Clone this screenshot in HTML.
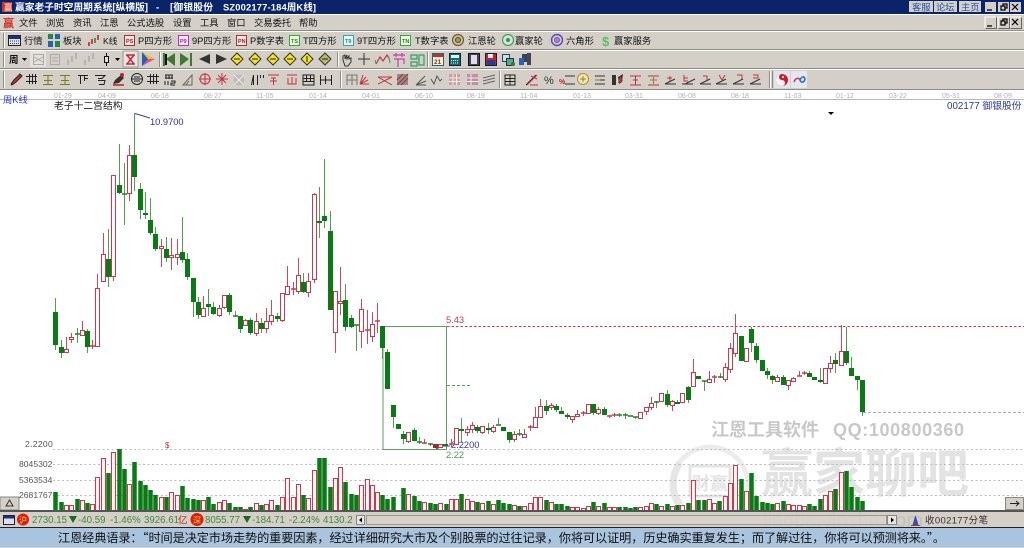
<!DOCTYPE html>
<html><head><meta charset="utf-8"><title>赢家老子时空周期系统</title>
<style>
html,body{margin:0;padding:0;width:1024px;height:548px;overflow:hidden;background:#fff}
svg{display:block;filter:blur(.3px)}
text{font-family:"Liberation Sans","WenQuanYi Zen Hei","Noto Sans CJK SC",sans-serif;white-space:pre}
.m{font-size:9.3px;fill:#111}
.ax{font-size:7px;fill:#b0b0b0}
.vl{font-size:8.6px;fill:#555}
.st{font-size:9.7px;fill:#3f8a3f}
.bx{font-size:5.5px;font-weight:bold}
.n{fill:none}
</style></head><body>
<svg width="1024" height="548" viewBox="0 0 1024 548" xmlns="http://www.w3.org/2000/svg">
<rect width="1024" height="548" fill="#fff"/>

<!-- title bar -->
<rect width="1024" height="14" fill="#0a246a"/>
<rect x="2" y="2" width="10" height="10" fill="#c9342a"/>
<text x="4" y="10.5" font-size="8.5" font-weight="bold" fill="#f6d3c0">赢</text>
<g font-size="9.8" font-weight="bold" fill="#fff"><text x="15" y="10.5" textLength="133">赢家老子时空周期系统[纵横版]</text><text x="156" y="10.5">-</text><text x="170" y="10.5" textLength="43">[御银股份</text><text x="223" y="10.5" textLength="93" font-size="9.4">SZ002177-184周K线]</text></g>
<g fill="#d4d0c8"><rect x="909" y="1" width="24" height="11"/><rect x="934" y="1" width="23" height="11"/><rect x="959" y="1" width="22" height="11"/><rect x="985" y="2" width="11" height="10"/><rect x="998" y="2" width="11" height="10"/><rect x="1010" y="2" width="11" height="10"/></g>
<g font-size="9.3" fill="#1f4fb0"><text x="912" y="10.5">客服</text><text x="936" y="10.5">论坛</text><text x="961" y="10.5">主页</text></g>
<path class="n" stroke="#000" stroke-width="1.2" d="M987 10h5M1001 6h4v4h-4zM1003 6v-2h4v4h-2M1012 4l6 6M1018 4l-6 6"/>

<!-- menu + toolbars bg -->
<rect y="14" width="1024" height="76" fill="#d4d0c8"/>
<path class="n" stroke="#fff" d="M0 14.5H1024M0 31.5H1024M0 50.5H1024M0 69.5H1024"/>
<path class="n" stroke="#8f8c85" d="M0 30.5H1024M0 49.5H1024M0 68.5H1024M0 89.5H1024"/>
<path class="n" stroke="#8f8c85" d="M3.5 33v15M3.5 52v15M3.5 71v17M159.5 52v15M337.5 52v15M427.5 52v15M340.5 71v17M499.5 71v17M769.5 71v17M772.5 71v17"/>
<path class="n" stroke="#fff" d="M4.5 33v15M4.5 52v15M4.5 71v17M160.5 52v15M338.5 52v15M428.5 52v15M341.5 71v17M500.5 71v17M770.5 71v17"/>

<!-- menu -->
<text x="3" y="27" font-size="11" font-weight="bold" fill="#d02a20">赢</text>
<g class="m"><text x="19" y="26">文件</text><text x="46" y="26">浏览</text><text x="73" y="26">资讯</text><text x="100" y="26">江恩</text><text x="127" y="26">公式选股</text><text x="173" y="26">设置</text><text x="200" y="26">工具</text><text x="227" y="26">窗口</text><text x="254" y="26">交易委托</text><text x="299" y="26">帮助</text></g>
<g fill="#d4d0c8"><rect x="985" y="17" width="11" height="11"/><rect x="998" y="17" width="11" height="11"/><rect x="1010" y="17" width="11" height="11"/></g>
<path class="n" stroke="#000" stroke-width="1.2" d="M987 26h5M1001 21h4v4h-4zM1003 21v-2h4v4h-2M1012 19l6 6M1018 19l-6 6"/>
<path class="n" stroke="#fff" d="M985 28V17h11M998 28V17h11M1010 28V17h11"/>
<path class="n" stroke="#666" d="M985.5 28.5h11v-11M998.5 28.5h11v-11M1010.5 28.5h11v-11"/>

<!-- toolbar row 1 -->
<rect x="8.5" y="35.5" width="12" height="10" fill="#dfe4f0" stroke="#223"/><rect x="9" y="36" width="11" height="3" fill="#1a2f80"/><path stroke="#334" stroke-dasharray="1 1" d="M10 41h9M10 43.5h9"/>
<g fill="#1c8a4c"><rect x="48" y="34" width="5" height="5"/><rect x="55" y="41" width="5" height="6"/></g><g fill="#2a5fb0"><rect x="55" y="34" width="5" height="5"/><rect x="48" y="41" width="5" height="6"/></g>
<path stroke="#c92020" stroke-width="1.6" d="M89 42v4M92 39v5M98 35v5"/><path stroke="#2a8a2a" stroke-width="1.6" d="M95 38v5"/>
<g class="m"><text x="24" y="44">行情</text><text x="63" y="44">板块</text><text x="103" y="44" font-size="8.6">K线</text><text x="138" y="44">P四方形</text><text x="192" y="44">9P四方形</text><text x="250" y="44">P数字表</text><text x="303" y="44">T四方形</text><text x="357" y="44">9T四方形</text><text x="415" y="44">T数字表</text><text x="468" y="44">江恩轮</text><text x="515" y="44">赢家轮</text><text x="566" y="44">六角形</text><text x="614" y="44">赢家服务</text></g>
<g><rect x="124.5" y="35.5" width="10" height="10" fill="#f6e6e6" stroke="#a33"/><text class="bx" x="126" y="43" fill="#a22">PS</text>
<rect x="178.5" y="35.5" width="10" height="10" fill="#f7eaf7" stroke="#b3b"/><text class="bx" x="180" y="43" fill="#a2a">P9</text>
<rect x="236.5" y="35.5" width="10" height="10" fill="#f6e6e6" stroke="#a33"/><text class="bx" x="238" y="43" fill="#a22">PN</text>
<rect x="289.5" y="35.5" width="10" height="10" fill="#eef8e6" stroke="#3a3"/><text class="bx" x="291" y="43" fill="#282">TS</text>
<rect x="343.5" y="35.5" width="10" height="10" fill="#e6f6f6" stroke="#3aa"/><text class="bx" x="345" y="43" fill="#288">T9</text>
<rect x="400.5" y="35.5" width="10" height="10" fill="#eef8e6" stroke="#3a3"/><text class="bx" x="402" y="43" fill="#282">TN</text></g>
<circle cx="458" cy="40" r="5.5" fill="#c8c090" stroke="#7a5a30" stroke-width="1.2"/><circle cx="458" cy="40" r="2.5" fill="#8aa070" stroke="#644"/>
<circle cx="508" cy="40" r="5.5" fill="#cfe8cf" stroke="#4a9a6a" stroke-width="1.2"/><circle cx="508" cy="40" r="2" fill="#3a8a6a"/>
<circle cx="557" cy="40" r="5.5" fill="#e0c0e0" stroke="#5050b0" stroke-width="1.4"/><circle cx="557" cy="40" r="2.5" fill="#70a0d0" stroke="#b04080"/>
<text x="602" y="46" font-size="13" font-weight="bold" fill="#5cc060">$</text>

<!-- toolbar row 2 -->
<text x="9" y="63" font-size="9.5" font-weight="bold" fill="#111">周</text>
<path d="M22 58h5l-2.500 3zM115 58h5l-2.500 3z" fill="#000"/>
<rect x="30" y="51" width="16" height="16" fill="#e4e2dc"/>
<rect x="33.500" y="54.500" width="10" height="10" fill="none" stroke="#aaa"/><path class="n" stroke="#aaa" d="M34 57l9 5M43 57l-9 5"/>
<rect x="50.500" y="54.500" width="9" height="10" fill="none" stroke="#aaa"/><path class="n" stroke="#aaa" d="M52 58h6M52 61h6"/>
<path class="n" stroke="#aaa" stroke-width="1.500" d="M68 60v5M72 56v6M76 53v6M85 60v5M89 56v6M93 53v6"/>
<path class="n" stroke="#111" d="M106.500 53v13"/><rect x="104.500" y="56.500" width="4" height="6" fill="#ddd" stroke="#111"/>
<rect x="123" y="51" width="15" height="16" fill="#e8e6e0" stroke="#999"/><path class="n" stroke="#c52a3a" stroke-width="1.500" d="M126 55h9M126 64h9M127 55l7 9M134 55l-7 9"/>
<path d="M142 52l13 7-13 0z" fill="#f0c020"/><path d="M142 59h13l-13 7z" fill="#e050a0"/><path d="M142 52v14l6-7z" fill="#2060c0"/>
<path d="M163 53h2v13h-2zM166 59l9-6v13z" fill="#3d7a30"/><path d="M192 53h-2v13h2zM189 59l-9-6v13z" fill="#3d7a30"/><path d="M165 54h2v11h-2z" fill="#111"/>
<path d="M199 59l11-5v10z" fill="#333"/><path d="M227 59l-11-5v10z" fill="#333"/>
<g fill="#f2e22a" stroke="#333"><path d="M237 53l6 6-6 6-6-6zM255 53l6 6-6 6-6-6zM273 53l6 6-6 6-6-6zM290 53l6 6-6 6-6-6zM307 53l6 6-6 6-6-6z"/><path d="M325 53l6 6-6 6-6-6z" fill="#bdb86a"/></g>
<path class="n" stroke="#222" d="M234 59h6M252 59h6M270 59h6M287 59h6M307 56v6M322 59h6"/>
<path class="n" stroke="#333" d="M343 60v-4l2-1v4l2-4v4l2-3v3l2-1v4l-3 4h-3z"/>
<path class="n" stroke="#333" d="M364 53v12M358 59h12"/>
<path class="n" stroke="#c83040" stroke-width="1.200" d="M376 64l4-7 3 4 4-6 2 3"/><path class="n" stroke="#3a9a5a" d="M376 64l-1-4M389 58l1 5"/>
<path class="n" stroke="#c040b0" stroke-width="1.200" d="M393 55h12M396 53v4M402 53v4M394 59h10v5M398 59v8"/>
<path class="n" stroke="#30a060" stroke-width="1.200" d="M411 55h6v4h-6zM419 55h5v10h-5zM411 62h6v4h-6z"/>
<rect x="432.500" y="53.500" width="11" height="12" fill="#f8f0d0" stroke="#1a6a80"/><rect x="433" y="54" width="10" height="3" fill="#c03030"/><text x="434" y="64" font-size="6.500" font-weight="bold" fill="#a03020">21</text>
<rect x="449.500" y="53.500" width="11" height="12" fill="#1c6a70" stroke="#123"/><rect x="451" y="55" width="8" height="3" fill="#cfe"/><path stroke="#cfe" stroke-dasharray="1 1" d="M451 60.500h8M451 63h8"/>
<rect x="468.500" y="53.500" width="11" height="12" fill="#445" stroke="#112"/><rect x="471" y="55" width="6" height="9" fill="#dde"/>
<rect x="485.500" y="53.500" width="11" height="12" fill="#c82030" stroke="#123"/><rect x="487" y="60" width="8" height="5" fill="#2040a0"/><rect x="488" y="54" width="5" height="4" fill="#eee"/>
<rect x="502.500" y="54.500" width="7" height="7" fill="#cde" stroke="#345"/><rect x="506.500" y="58.500" width="7" height="7" fill="#5a8" stroke="#234"/>
<circle cx="513" cy="64" r="2" fill="#2a7a3a"/>
<rect x="522" y="54" width="6" height="8" fill="#345"/><rect x="527" y="53" width="4" height="12" fill="#445"/><path d="M519 58h5v7h-5z" fill="#3060b0"/>

<!-- toolbar row 3 -->
<g class="n" stroke="#222">
<path d="M26 76.500h11M26 81.500h11M29.500 74v10M32.500 74v10M35.500 74v10M147 76.500h12M147 81.500h12M150.500 74v10M153.500 74v10M156.500 74v10"/>
<path d="M78 75.500h10M80.500 75v9M84.500 75v6M84 78.500h4M95 75.500h10l-3 3h-4M98 80.500h7l-1 4h-5"/>
<circle cx="137" cy="79" r="5.500"/><path d="M131 79h12M134 77h6M134 81h6"/>
<path d="M165 75h8M165 78h8M166 75v4M169 75v4M172 75v4M165 81v4M168 81v4M171 81h4v2h-4v2h4"/>
<path d="M183 85l9-10v10zM186 85l3-4" stroke="#666"/>
<path d="M251.500 85l2-10v10M257.500 85v-10M260.500 75v3M263.500 75v3"/>
<path d="M303 75h11v10h-11zM303 78.500h11M303 81.500h11M306.500 75v6M310.500 75v6"/>
<path d="M320.500 75v10M331.500 75v10M321 80h10M325.500 76v8"/>
<path d="M347 75h10v5h-10zM347 75v10M352 75v10M357 75v10" stroke="#777"/>
<path d="M416 85l9-9M416 85l10-4M416 85h10" stroke="#555"/>
<path d="M431 79l3 5 3-8 3 5 2-2" stroke="#555"/>
<path d="M483 78l12-3M483 81l12-3M483 84l12-3" stroke="#666"/>
<path d="M505 75h10v10h-10zM505 78.500h10M505 81.500h10M510 75v10"/>
<path d="M526 85l10-10"/>
</g>
<path d="M11 84l3-4 6-6 2 2-6 6-4 3z" fill="#c83030" stroke="#222"/>
<path class="n" stroke="#7a7a20" d="M43 75.500h10M44 80.500h8M43 84.500h10M48 75v10M60 75.500h10M61 80.500h8M60 84.500h10M65 75v10"/>
<path d="M113 84l2-4 6-5 3 3-5 5z" fill="#333"/><path d="M113 85h11" stroke="#c02020" stroke-width="1.500"/><circle cx="122" cy="75" r="2" fill="#c02020"/>
<g class="n" stroke="#c83040"><circle cx="205" cy="79" r="5"/><path d="M199 79h12M205 73v12M216 79h12M222 73v12M218 75l8 8M226 75l-8 8"/><path d="M268 75h11M271 78h5M270 81h7M273.500 78v7M287 75h10M288 78v6h8v-6M292 77v7M360 84l3-9M360 84l6-7M360 84l8-4M360 84h9M378 77l14 0M378 84l14-7M378 77l14 8"/></g>
<rect x="234" y="75" width="10" height="10" fill="#bbb"/><path stroke="#eee" d="M234 75l10 10M244 75l-10 10"/>
<rect x="397" y="74" width="11" height="11" fill="#b87a80"/><path stroke="#555" d="M397 85l11-11M401 85l7-7M397 80l6-6"/>
<rect x="449" y="74" width="11" height="11" fill="#d0a0a0"/><path stroke="#eee" d="M449 78h11M449 81.500h11M453 74v11M456.500 74v11"/>
<rect x="467" y="74" width="11" height="11" fill="#c090a0"/><path stroke="#eee" d="M467 78h11M467 81.500h11M471 74v11"/>
<path class="n" stroke="#c83040" d="M527 85l10-10M530 85h8M531 76l6 3"/>
<text x="544" y="84" font-size="11" fill="#333">%</text>
<path class="n" stroke="#333" d="M565 76h10M565 84h10"/><text x="559" y="84" font-size="7" font-weight="bold" fill="#c02020">%</text>
<circle cx="583" cy="79" r="5.500" fill="#f0e8b0" stroke="#b09030"/><path class="n" stroke="#a08020" d="M580 79h6M583 76v6"/>
<path class="n" stroke="#333" d="M595 76h10M595 84h10M600 80h5"/><path stroke="#8a8020" d="M595 80h5"/>
<path d="M612 75h4v10h-4zM618 77l5-3-1 8-3 2z" fill="#333"/><path d="M620 76l3 5-5 2z" fill="#c03030"/>
<path class="n" stroke="#c83040" d="M630 85h11M630 76h11M633 80h5M635.500 76v9"/>
<path class="n" stroke="#c83040" d="M648 85h11M648 76h11"/><path class="n" stroke="#a08020" d="M650 80h7M653.500 77v7"/>
<g class="n" stroke="#333"><path d="M665 84l10-5M665 84h11M685 84l10-5M682 84h11M700 84l10-5M700 84h11M716 84l10-5M716 84h11M733 84l10-5M733 84h11M750 84l10-5M750 84h11"/></g>
<g class="n" stroke="#c83040"><path d="M670 76v5M667 78h5M684 75v6h4M684 78h4M703 76h4v4M719 75l3 5M725 75l-3 5M737 75h5v4M753 75h5v3h-5"/></g>
<rect x="774" y="71" width="16" height="17" fill="#dde6f0"/><rect x="791" y="71" width="16" height="17" fill="#e4e8ee"/>
<circle cx="782" cy="80" r="6" fill="#d01828"/><path d="M782 74a3 3 0 0 1 0 6a3 3 0 0 0 0 6a6 6 0 0 0 0-12z" fill="#f4f4f4" transform="matrix(-1 0 0 1 1564 0)"/><circle cx="783" cy="77" r="1" fill="#fff"/>
<path class="n" stroke="#e03060" stroke-width="1.600" d="M794 82c2-5 5-4 6-2"/><path class="n" stroke="#3070d0" stroke-width="1.600" d="M800 80c1 3 4 3 5-1c-1-3-3-3-5 1"/>

<!-- time axis -->
<path stroke="#b8b8b8" d="M0 99.500H1024"/>
<g class="ax">
<text x="54" y="98">01-29</text><text x="98" y="98">04-09</text><text x="151" y="98">06-18</text><text x="204" y="98">08-27</text><text x="256" y="98">11-05</text><text x="309" y="98">01-14</text><text x="362" y="98">04-01</text><text x="415" y="98">06-10</text><text x="467" y="98">08-19</text><text x="520" y="98">11-04</text><text x="573" y="98">01-13</text><text x="625" y="98">03-31</text><text x="678" y="98">06-08</text><text x="731" y="98">08-18</text><text x="784" y="98">11-03</text><text x="836" y="98">01-12</text><text x="889" y="98">03-22</text><text x="942" y="98">05-31</text><text x="994" y="98">08-09</text>
</g>
<text x="3" y="103" font-size="9.300" fill="#2a3cc8">周K线</text>
<text x="54" y="109" font-size="9.800" fill="#222">老子十二宫结构</text>
<text x="947" y="109" font-size="9.800" fill="#2a3a9a">002177 御银股份</text>
<path d="M828 112h6l-3 3z" fill="#000"/>

<!-- watermark -->
<g>
<g class="n" stroke="#ececec" stroke-width="5"><circle cx="710" cy="485" r="38"/></g>
<g class="n" stroke="#e6e6e6" stroke-width="7"><path d="M680 505a36 36 0 0 1 0-42"/></g>
<rect x="690" y="466" width="40" height="30" fill="none" stroke="#e4e4e4" stroke-width="3"/>
<text x="692" y="490" font-size="18" font-weight="bold" fill="#e4e4e4">财赢</text>
<text x="761" y="492" font-size="52" font-weight="bold" fill="#e3e3e3">赢家聊吧</text>
<text x="711" y="436" font-size="18" font-weight="bold" fill="#c8c8c8">江恩工具软件</text>
<text x="833" y="436" font-size="18" font-weight="bold" fill="#c8c8c8" textLength="131">QQ:100800360</text>
</g>

<!-- grid + reference lines -->
<g class="n" stroke="#bdbdbd" stroke-dasharray="2 2.500"><path d="M53 449.500H1024M53 464.500H1024M53 480.500H1024M53 495.500H1024"/></g>
<path class="n" stroke="#aaa" stroke-dasharray="3 2" d="M863 412.500H1024"/>
<path class="n" stroke="#d03a48" stroke-dasharray="2.500 2" d="M447 326.500H1024"/>
<path class="n" stroke="#5fa05f" d="M383 326.500H446.500V449.500H383z"/>
<path class="n" stroke="#5fa05f" stroke-dasharray="3 2" d="M447 385.500H472"/>
<path class="n" stroke="#3a3aaa" d="M135 113.500l15 4.500"/>
<text x="150" y="125" font-size="9.300" fill="#303090">10.9700</text>
<text x="446" y="323" font-size="9.300" fill="#c04050">5.43</text>
<text x="451" y="448" font-size="9.300" fill="#3a3ab0">2.2200</text>
<text x="446" y="458" font-size="9.300" fill="#4a9a4a">2.22</text>
<path class="n" stroke="#3a3ab0" d="M436 449l6-3h8"/>
<text x="165" y="448" font-size="8" fill="#c83030">$</text>

<!-- candles: green wicks -->
<path class="n" stroke="#4f9f4f" d="M55.500 298V350M61.500 340V358M77.500 328V343M87.500 329V353M108.500 229V287M119.500 144V194M124.500 163V225M134.500 113V191M140.500 183V219M145.500 192V219M150.500 198V235M155.500 227V251M166.500 237V262M182.500 217V263M187.500 253V280M193.500 278V317M198.500 297V319M208.500 289V316M213.500 302V315M229.500 293V315M235.500 311V317M240.500 316V333M250.500 318V335M261.500 318V333M277.500 313V322M303.500 273V293M319.500 187V238M324.500 159V228M330.500 211V310M345.500 284V331M351.500 315V328M356.500 325V351M382.500 326V359M387.500 349V389M393.500 405V428M403.500 431V444M414.500 428V441M419.500 437V444M430.500 443V446M461.500 418V443M477.500 425V433M488.500 423V434M498.500 418V425M509.500 432V443M519.500 429V436M546.500 400V415M556.500 404V412M561.500 407V414M567.500 413V419M593.500 404V415M604.500 407V415M619.500 413V417M625.500 413V419M635.500 417V419M656.500 401V408M667.500 390V407M677.500 400V404M688.500 386V403M704.500 381V391M720.500 373V378M751.500 327V352M756.500 343V363M767.500 368V379M772.500 375V384M783.500 375V385M809.500 371V377M820.500 368V383M835.500 353V373M846.500 327V365M851.500 357V376M857.500 376V390M862.500 380V416"/>
<!-- green bodies -->
<path class="n" stroke="#0a7a14" stroke-width="5" d="M55.500 312V345M61.500 347V353M87.500 331V347M108.500 259V277M119.500 185V193M134.500 155V177M140.500 189V210M145.500 213V215M150.500 220V233M155.500 234V249M166.500 249V258M182.500 252V260M187.500 259V277M193.500 278V302M198.500 302V315M208.500 304V307M213.500 307V314M229.500 295V312M240.500 316V329M250.500 320V333M261.500 323V329M277.500 316V319M303.500 282V292M319.500 221V223M324.500 216V221M330.500 231V310M345.500 300V327M351.500 318V327M382.500 326V348M387.500 352V389M393.500 405V417M398.500 424V429M403.500 434V439M414.500 430V441M445.500 444V446M461.500 429V431M477.500 427V431M488.500 428V430M503.500 427V431M509.500 432V440M546.500 406V411M556.500 406V410M561.500 411V414M567.500 415V417M593.500 404V413M604.500 409V415M667.500 394V405M677.500 402V404M688.500 387V400M698.500 376V379M741.500 336V361M751.500 329V343M756.500 346V360M762.500 360V371M767.500 371V375M772.500 376V380M783.500 377V385M809.500 373V377M814.500 377V380M820.500 380V382M835.500 360V364M846.500 351V363M851.500 368V376M857.500 376V380M862.500 380V412"/>
<!-- green dojis -->
<path class="n" stroke="#1a8020" stroke-width="1.500" d="M75 334h5M122 194h5M233 316h5M354 325h5M417 442h5M428 444h5M496 425h5M517 434h5M617 415h5M623 415h5M628 416h5M633 417h5M654 402h5M702 381h5M718 377h5"/>
<!-- red wicks -->
<path class="n" stroke="#d0485a" d="M66.500 337V353M71.500 333V343M82.500 321V336M92.500 340V349M97.500 274V347M103.500 233V281M113.500 175V281M129.500 145V201M161.500 239V267M171.500 238V270M177.500 239V265M203.500 296V317M219.500 305V317M224.500 295V309M245.500 319V326M256.500 313V336M266.500 308V333M271.500 300V325M282.500 293V322M287.500 266V295M293.500 282V295M298.500 258V294M308.500 273V297M314.500 193V283M335.500 291V353M340.500 267V315M361.500 299V348M367.500 310V344M372.500 312V342M377.500 303V333M408.500 432V443M424.500 439V444M451.500 439V447M467.500 426V436M472.500 422V433M482.500 426V434M493.500 425V433M514.500 431V442M524.500 429V438M530.500 425V431M535.500 407V427M540.500 399V417M551.500 403V410M572.500 416V423M577.500 410V416M583.500 411V416M598.500 407V415M609.500 415V418M614.500 413V417M646.500 407V415M651.500 397V410M672.500 400V411M693.500 359V386M709.500 371V382M714.500 375V383M725.500 363V382M730.500 343V373M735.500 314V357M777.500 375V381M788.500 380V390M793.500 377V381M799.500 371V376M804.500 371V375M830.500 356V373M841.500 325V365"/>
<!-- red bodies -->
<g transform="translate(0 .5)"><path fill="#fff" stroke="#c93a4c" d="M64.500 349h4V352h-4zM69.500 337h4V339h-4zM80.500 330h4V335h-4zM95.500 288h4V346h-4zM101.500 254h4V281h-4zM111.500 175h4V276h-4zM127.500 155h4V193h-4zM159.500 246h4V248h-4zM169.500 255h4V257h-4zM175.500 254h4V257h-4zM201.500 308h4V316h-4zM217.500 308h4V315h-4zM222.500 295h4V307h-4zM243.500 320h4V325h-4zM254.500 321h4V333h-4zM264.500 321h4V328h-4zM269.500 315h4V321h-4zM280.500 293h4V320h-4zM285.500 286h4V294h-4zM296.500 275h4V291h-4zM306.500 281h4V292h-4zM312.500 194h4V279h-4zM333.500 291h4V332h-4zM338.500 301h4V303h-4zM359.500 309h4V331h-4zM370.500 324h4V336h-4zM406.500 432h4V441h-4zM438.500 444h4V447h-4zM454.500 428h4V444h-4zM465.500 429h4V432h-4zM470.500 425h4V429h-4zM480.500 426h4V432h-4zM491.500 427h4V431h-4zM512.500 434h4V439h-4zM522.500 434h4V437h-4zM533.500 417h4V427h-4zM538.500 406h4V417h-4zM549.500 405h4V407h-4zM570.500 416h4V419h-4zM575.500 414h4V416h-4zM586.500 404h4V413h-4zM596.500 409h4V413h-4zM638.500 412h4V418h-4zM644.500 407h4V411h-4zM649.500 403h4V407h-4zM659.500 393h4V401h-4zM670.500 401h4V405h-4zM680.500 393h4V402h-4zM691.500 372h4V386h-4zM707.500 379h4V382h-4zM723.500 367h4V379h-4zM728.500 348h4V369h-4zM733.500 333h4V353h-4zM744.500 348h4V361h-4zM775.500 377h4V381h-4zM786.500 380h4V385h-4zM791.500 378h4V381h-4zM823.500 368h4V383h-4zM828.500 363h4V368h-4zM839.500 351h4V365h-4z"/></g>
<path d="M433 444h5v4h-5z" fill="#a02a2a"/>
<path class="n" stroke="#c93a4c" stroke-width="1.500" d="M90 346h5M291 289h5M365 330h5M375 321h5M422 443h5M449 444h5M528 427h5M581 413h5M607 416h5M612 415h5M712 377h5M797 376h5M802 373h5"/>

<!-- volume labels -->
<g class="vl"><text x="25" y="447" letter-spacing=".3">2.2200</text><text x="19" y="467">8045302</text><text x="19" y="483">5363534</text><text x="19" y="498">2681767</text></g>

<!-- volume green -->
<path class="n" stroke="#0a7a14" stroke-width="4.500" d="M55.500 492V510M61.500 502V510M77.500 499V510M87.500 503V510M108.500 473V510M119.500 449V510M124.500 469V510M134.500 462V510M140.500 481V510M145.500 485V510M150.500 490V510M155.500 495V510M166.500 497V510M182.500 486V510M187.500 498V510M193.500 499V510M198.500 500V510M208.500 497V510M213.500 504V510M229.500 503V510M235.500 507V510M240.500 507V510M250.500 507V510M261.500 505V510M277.500 505V510M303.500 495V510M319.500 458V510M324.500 458V510M330.500 487V510M345.500 482V510M351.500 494V510M356.500 495V510M382.500 495V510M387.500 499V510M393.500 497V510M403.500 488V510M414.500 496V510M419.500 501V510M430.500 503V510M435.500 504V510M446.500 504V510M461.500 494V510M477.500 502V510M488.500 501V510M498.500 500V510M503.500 503V510M509.500 504V510M519.500 506V510M546.500 500V510M556.500 504V510M561.500 504V510M567.500 506V510M593.500 502V510M604.500 503V510M619.500 507V510M625.500 507V510M630.500 508V510M635.500 507V510M656.500 504V510M667.500 504V510M677.500 505V510M688.500 503V510M698.500 500V510M704.500 500V510M719.500 501V510M741.500 479V510M751.500 473V510M756.500 496V510M762.500 502V510M767.500 503V510M772.500 504V510M783.500 501V510M809.500 504V510M814.500 506V510M820.500 499V510M835.500 489V510M846.500 471V510M851.500 487V510M857.500 497V510M862.500 501V510"/>
<!-- volume red -->
<g transform="translate(0 .5)"><path fill="#fff3f3" stroke="#c93a4c" d="M64.500 505h4V510h-4zM69.500 505h4V510h-4zM80.500 500h4V510h-4zM90.500 504h4V510h-4zM95.500 477h4V510h-4zM101.500 458h4V510h-4zM111.500 452h4V510h-4zM127.500 484h4V510h-4zM159.500 497h4V510h-4zM169.500 492h4V510h-4zM175.500 495h4V510h-4zM201.500 500h4V510h-4zM217.500 502h4V510h-4zM222.500 500h4V510h-4zM243.500 509h4V510h-4zM254.500 503h4V510h-4zM264.500 504h4V510h-4zM269.500 500h4V510h-4zM280.500 497h4V510h-4zM285.500 478h4V510h-4zM291.500 497h4V510h-4zM296.500 484h4V510h-4zM306.500 498h4V510h-4zM312.500 470h4V510h-4zM333.500 478h4V510h-4zM338.500 467h4V510h-4zM359.500 485h4V510h-4zM365.500 479h4V510h-4zM370.500 485h4V510h-4zM375.500 492h4V510h-4zM406.500 494h4V510h-4zM422.500 502h4V510h-4zM438.500 503h4V510h-4zM449.500 499h4V510h-4zM454.500 499h4V510h-4zM465.500 499h4V510h-4zM470.500 501h4V510h-4zM480.500 503h4V510h-4zM491.500 504h4V510h-4zM512.500 505h4V510h-4zM522.500 506h4V510h-4zM528.500 503h4V510h-4zM533.500 497h4V510h-4zM538.500 497h4V510h-4zM549.500 502h4V510h-4zM570.500 507h4V510h-4zM575.500 507h4V510h-4zM581.500 508h4V510h-4zM586.500 506h4V510h-4zM596.500 506h4V510h-4zM607.500 507h4V510h-4zM612.500 507h4V510h-4zM638.500 507h4V510h-4zM644.500 506h4V510h-4zM649.500 503h4V510h-4zM659.500 506h4V510h-4zM670.500 506h4V510h-4zM680.500 505h4V510h-4zM691.500 480h4V510h-4zM707.500 499h4V510h-4zM712.500 503h4V510h-4zM723.500 496h4V510h-4zM728.500 483h4V510h-4zM733.500 465h4V510h-4zM744.500 491h4V510h-4zM775.500 503h4V510h-4zM786.500 504h4V510h-4zM791.500 505h4V510h-4zM797.500 505h4V510h-4zM802.500 506h4V510h-4zM823.500 495h4V510h-4zM828.500 491h4V510h-4zM839.500 472h4V510h-4z"/></g>

<!-- buttons over the volume panel -->
<rect x="0" y="497" width="19" height="13" fill="#d4d0c8" stroke="#888"/><path class="n" stroke="#333" d="M6 506l3.500-6 3.500 6z"/>
<rect x="1005.500" y="497.500" width="18" height="12" fill="#d4d0c8" stroke="#888"/><path class="n" stroke="#222" d="M1010 503.500h9M1016 501l3 2.500-3 2.500"/>

<!-- status row -->
<rect y="510" width="1024" height="2" fill="#555"/>
<rect y="512" width="1024" height="15" fill="#d4d0c8"/>
<text x="763" y="527" font-size="20" fill="#c4c1ba">jiaoba.yinsha.com</text>
<rect x="3.500" y="515.500" width="11" height="9" fill="#dde" stroke="#223"/><rect x="4" y="516" width="10" height="2.500" fill="#1a2f80"/>
<circle cx="23" cy="519.500" r="6" fill="#d82010"/><text x="19" y="523" font-size="8" fill="#ffd040">沪</text>
<text class="st" x="32" y="523">2730.15</text><path d="M69 516h8l-4 7z" fill="#1a6a1a"/><text class="st" x="78" y="523">-40.59</text><text class="st" x="110" y="523">-1.46%</text><text class="st" x="144" y="523">3926.61</text><text x="178" y="523.500" font-size="9.500" fill="#c02020">亿</text>
<circle cx="197" cy="519.500" r="6.500" fill="#d82010"/><text x="193" y="523" font-size="8" fill="#ffd040">深</text>
<text class="st" x="205" y="523">8055.77</text><path d="M243 516h8l-4 7z" fill="#1a6a1a"/><text class="st" x="252" y="523">-184.71</text><text class="st" x="289" y="523">-2.24%</text><text class="st" x="323" y="523">4130.2</text>
<rect x="355" y="512" width="542" height="15" fill="#d4d0c8" opacity=".55"/>
<rect x="356.500" y="515.500" width="8" height="9" fill="#e8e6e0" stroke="#888"/><path d="M359 520l3-2.500v5z" fill="#000"/>
<rect x="366.500" y="515.500" width="520" height="9" fill="#d8d5cd" fill-opacity=".6" stroke="#999"/>
<rect x="887.500" y="515.500" width="9" height="9" fill="#e8e6e0" stroke="#888"/><path d="M891 517.500l3 2.500-3 2.500z" fill="#000"/>
<path d="M915.500 515l3 10h-6z" fill="#3050b0"/><path stroke="#c03030" d="M911 525.500h9"/>
<text x="925" y="523.500" font-size="9.500" fill="#333" textLength="63">收002177分笔</text>

<!-- footer -->
<path stroke="#222" d="M0 527.500H1024"/>
<rect y="528" width="1024" height="19" fill="#a9c4de"/>
<rect y="547" width="1024" height="1" fill="#d4d0c8"/>
<text x="58" y="542" font-size="12.200" fill="#111" textLength="887" style='font-family:"WenQuanYi Zen Hei","Noto Sans CJK SC",sans-serif'>江恩经典语录：“时间是决定市场走势的重要因素，经过详细研究大市及个别股票的过往记录，你将可以证明，历史确实重复发生；而了解过往，你将可以预测将来。”。</text>
</svg>
</body></html>
